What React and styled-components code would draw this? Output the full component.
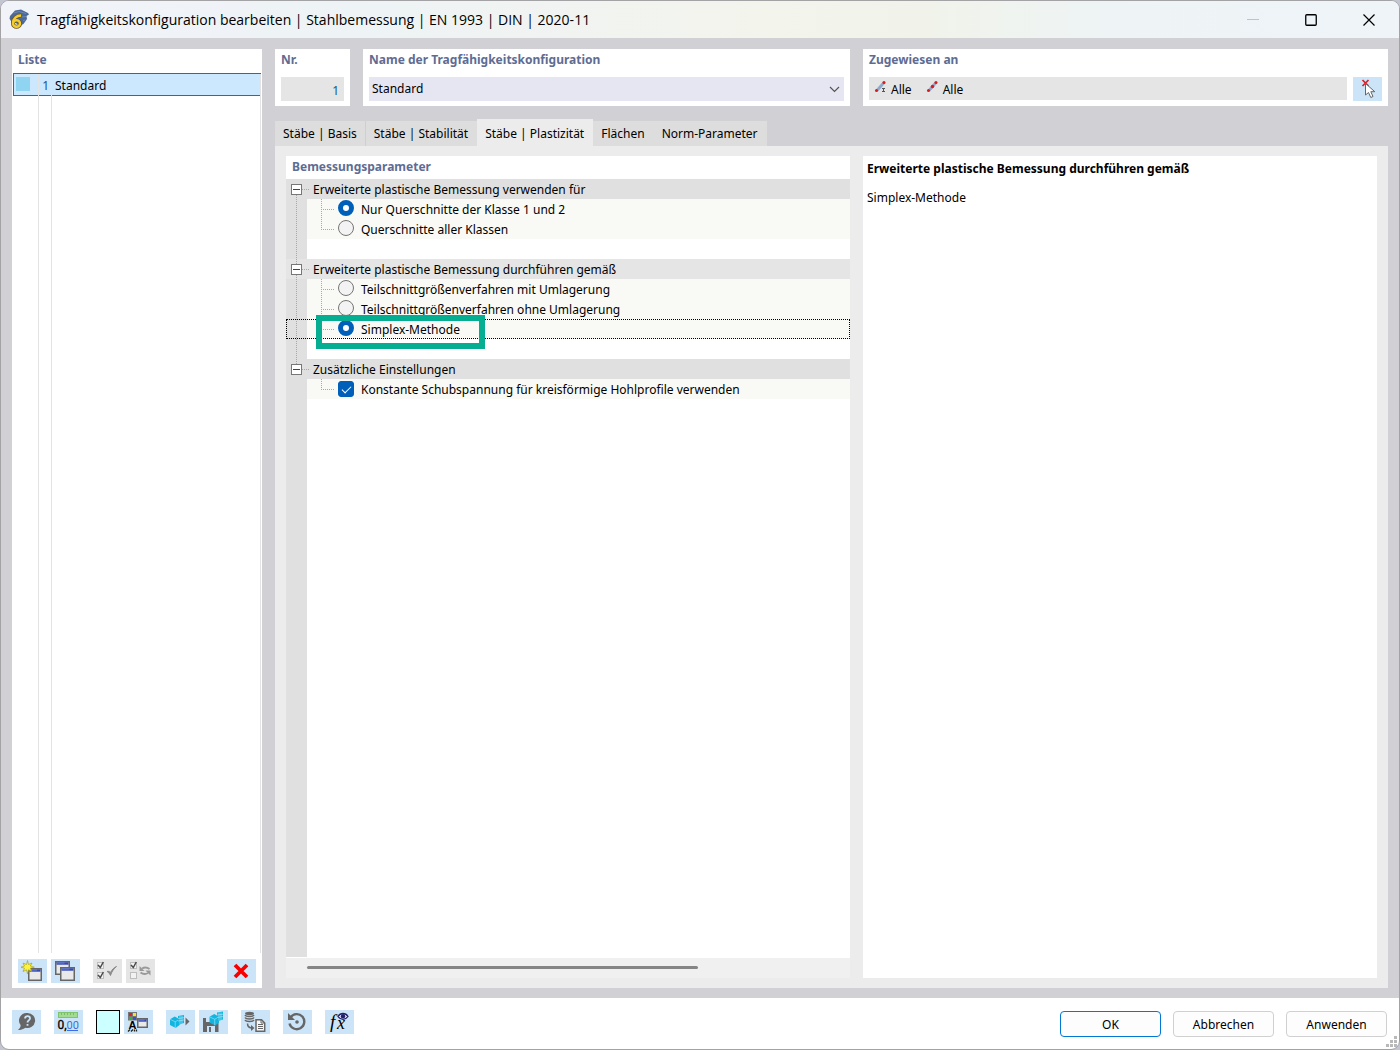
import React, { useState } from "react";
import styled, { createGlobalStyle, css } from "styled-components";

const BLUE = "#cce4f7";
const dotsDown = "repeating-linear-gradient(to bottom, #a8a8a8 0 1px, transparent 1px 2px)";
const dotsAcross = "repeating-linear-gradient(to right, #a8a8a8 0 1px, transparent 1px 2px)";

const GlobalStyle = createGlobalStyle`
  * { box-sizing: border-box; }
  body {
    margin: 0;
    background: #c3c5d0;
    color: #000;
    font-family: "Noto Sans", "Open Sans", sans-serif;
    font-size: 12px;
    line-height: 20px;
  }
  button, input, select { font: inherit; color: inherit; margin: 0; }
`;

const Window = styled.div`
  display: flex;
  flex-direction: column;
  min-height: 100vh;
  border: 1px solid #a3a3a6;
  border-radius: 9px;
  background: #fff;
  overflow: hidden;
  position: relative;
`;

const TitleBar = styled.header`
  display: flex;
  align-items: center;
  height: 37px;
  padding: 0 1px 0 8px;
  background: linear-gradient(to right, #f1f3f9 0%, #eef3f6 25%, #f3f4ec 55%, #f1f3ea 66%, #eef3f6 80%, #eff4f8 100%);
`;

const Title = styled.h1`
  flex: 1;
  margin: 0 0 0 7px;
  font-family: "Open Sans", "Noto Sans", sans-serif;
  font-size: 14px;
  font-weight: 400;
`;

const CaptionButton = styled.button`
  display: flex;
  align-items: center;
  justify-content: center;
  width: 58px;
  height: 36px;
  padding: 0;
  border: 0;
  background: none;
`;

const Body = styled.main`
  flex: 1;
  display: grid;
  grid-template-columns: 250px minmax(0, 1fr);
  gap: 13px;
  padding: 11px 11px 10px;
  background: #d1d0d5;
`;

const Panel = styled.section`
  display: flex;
  flex-direction: column;
  min-width: 0;
  background: #fff;
`;

const Heading = styled.h2`
  margin: 0;
  padding: 1px 6px 2px;
  font-size: 12px;
  font-weight: 700;
  line-height: 20px;
  color: #5e6c93;
`;

const ListHeading = styled(Heading)`
  padding-bottom: 3px;
`;

const listColumns = css`
  display: grid;
  grid-template-columns: 25px 13px minmax(0, 1fr);
  margin-right: 1px;
  & > span { border-right: 1px solid #e3e3e3; }
`;

const ListItem = styled.button`
  ${listColumns}
  height: 23px;
  margin-left: 1px;
  padding: 0;
  border: solid #0078d7;
  border-width: 1px 0 1px 1px;
  background: #cce8ff;
  text-align: left;
  line-height: 23px;
`;

const ItemSwatch = styled.span`
  padding: 3px 0 0 2px;
  &::before {
    content: "";
    display: block;
    width: 14px;
    height: 14px;
    background: #8fd5f2;
  }
`;

const ItemNumber = styled.span`
  padding-right: 2px;
  text-align: right;
  color: #20558c;
`;

const ItemName = styled.span`
  padding-left: 3px;
`;

const ListSpace = styled.div`
  ${listColumns}
  flex: 1;
  margin-left: 2px;
`;

const ListTools = styled.div`
  display: flex;
  gap: 4px;
  padding: 6px 6px 5px;
`;

const IconButton = styled.button`
  display: block;
  flex: none;
  width: 29px;
  height: 24px;
  padding: 0;
  border: 0;
  background: ${(p) => (p.disabled ? "#e5e5e5" : BLUE)};
  margin-left: ${(p) => (p.$start ? "9px" : p.$end ? "auto" : "0")};
  svg { display: block; }
`;

const Details = styled.div`
  display: flex;
  flex-direction: column;
  min-width: 0;
`;

const Fields = styled.div`
  display: grid;
  grid-template-columns: 75px minmax(0, 487fr) minmax(0, 525fr);
  gap: 13px;
`;

const FieldPanel = styled(Panel)`
  height: 57px;
`;

const FieldBody = styled.div`
  display: flex;
  gap: 6px;
  padding: 5px 6px;
`;

const NumberInput = styled.input`
  width: 100%;
  height: 24px;
  padding: 2px 5px 0;
  border: 0;
  background: #e5e5e5;
  color: #20558c;
  text-align: right;
`;

const SelectBox = styled.div`
  flex: 1;
  display: grid;
  align-items: center;
  background: #e6e6f2;
  & > * { grid-area: 1 / 1; }
  svg { justify-self: end; margin-right: 4px; pointer-events: none; }
`;

const Select = styled.select`
  width: 100%;
  height: 24px;
  padding: 0 24px 0 3px;
  border: 0;
  background: none;
  appearance: none;
`;

const Assigned = styled.div`
  flex: 1;
  display: flex;
  gap: 14px;
  height: 23px;
  padding: 0 5px;
  background: #e5e5e5;
`;

const AssignedItem = styled.span`
  display: flex;
  gap: 2px;
  line-height: 26px;
`;

const Tabs = styled.div`
  display: flex;
  align-items: flex-end;
  margin-top: 13px;
`;

const Tab = styled.button`
  padding: ${(p) => (p["aria-selected"] ? 5 : 3)}px 8px 2px;
  border: 0;
  border-right: 1px solid ${(p) => (p["aria-selected"] ? "#ececec" : p.$divided ? "#cfcfd2" : "#dddddd")};
  background: ${(p) => (p["aria-selected"] ? "#ececec" : "#dddddd")};
  white-space: nowrap;
`;

const TabPage = styled.div`
  flex: 1;
  display: grid;
  grid-template-columns: minmax(0, 564fr) minmax(0, 514fr);
  gap: 13px;
  padding: 10px 11px;
  background: #ececec;
`;

const Tree = styled.div`
  flex: 1;
  display: flex;
  flex-direction: column;
`;

const Gutter = styled.span`
  flex: none;
  width: 21px;
  align-self: stretch;
  background: ${(p) => (p.$line ? `${dotsDown} 10px 0 / 1px 100% no-repeat, ` : "")}#e0e0e0;
`;

const GroupRow = styled.div`
  display: flex;
  height: 20px;
  background: ${(p) => p.$tint};
`;

const GroupToggle = styled.button`
  flex: none;
  display: flex;
  align-items: center;
  width: 25px;
  height: 20px;
  padding: 0 0 0 5px;
  border: 0;
  background:
    ${(p) => (p.$lineAbove ? `${dotsDown} 10px 0 / 1px 5px no-repeat,` : "")}
    ${(p) => (p.$lineBelow ? `${dotsDown} 10px 16px / 1px 4px no-repeat,` : "")}
    ${dotsAcross} 16px 10px / 8px 1px no-repeat;
`;

const GroupName = styled.span`
  padding-left: 2px;
  line-height: 22px;
`;

const OptionRow = styled.div`
  display: flex;
  height: 20px;
  background: #f9faf5;
  ${(p) => p.$focused && css`outline: 1px dotted #000; outline-offset: -1px;`}
`;

const SpacerRow = styled.div`
  display: flex;
  height: 20px;
`;

const Branch = styled.span`
  flex: none;
  width: 31px;
  padding-left: 14px;
  &::before {
    content: "";
    display: block;
    width: 13px;
    height: ${(p) => (p.$last ? 11 : 20)}px;
    background: ${dotsDown} 0 0 / 1px 100% no-repeat, ${dotsAcross} 0 10px / 13px 1px no-repeat;
  }
`;

const Option = styled.label`
  display: flex;
  gap: 7px;
  line-height: 22px;
  white-space: nowrap;
  position: relative;
`;

const Radio = styled.input`
  appearance: none;
  width: 16px;
  height: 16px;
  margin-top: 1px;
  border: 1px solid #757575;
  border-radius: 50%;
  background: #f3f3f3;
  &:checked { border: 5px solid #005fb8; background: #fff; }
`;

const Checkbox = styled.input`
  appearance: none;
  width: 16px;
  height: 16px;
  margin-top: 2px;
  border: 1px solid #757575;
  border-radius: 3px;
  background: #f3f3f3;
  &:checked {
    border-color: #005fb8;
    background: #005fb8;
    display: grid;
    place-items: center;
  }
  &:checked::before {
    content: "";
    width: 8px;
    height: 4px;
    border: solid #fff;
    border-width: 0 0 1px 1px;
    transform: rotate(-45deg);
    margin-bottom: 2px;
  }
`;

const Marker = styled.span`
  position: absolute;
  top: -4px;
  left: -22px;
  width: 169px;
  height: 34px;
  border: 6px solid #05ae90;
  pointer-events: none;
  z-index: 1;
`;

const TreeSpace = styled.div`
  flex: 1;
  display: flex;
`;

const ScrollBar = styled.div`
  height: 21px;
  padding: 8px 0 0 21px;
  border-top: 1px solid #fff;
  background: #f0f0f0;
  &::before {
    content: "";
    display: block;
    width: 72%;
    height: 3px;
    border-radius: 2px;
    background: #858585;
  }
`;

const InfoPanel = styled(Panel)`
  padding: 3px 4px;
`;

const InfoTitle = styled.h3`
  margin: 0 0 9px;
  font-size: 12px;
  font-weight: 700;
`;

const InfoText = styled.p`
  margin: 0;
`;

const Footer = styled.footer`
  display: flex;
  justify-content: space-between;
  height: 51px;
  padding: 12px 12px 0 11px;
`;

const FooterTools = styled.div`
  display: flex;
  gap: 4px;
`;

const ColorButton = styled(IconButton)`
  width: 24px;
  border: 1px solid #000;
  background: #ccffff;
`;

const DialogButtons = styled.div`
  display: flex;
  gap: 12px;
  padding-top: 1px;
`;

const DialogButton = styled.button`
  width: 101px;
  height: 26px;
  padding: 2px 0 0;
  border: 1px solid ${(p) => (p.$primary ? "#0078d4" : "#d0d0d0")};
  border-radius: 4px;
  background: #fdfdfd;
`;

const Grip = styled.svg`
  position: absolute;
  right: 2px;
  bottom: 2px;
`;

const Icon = ({ children }) => (
  <svg width="29" height="24" viewBox="0 0 29 24" fill="none" aria-hidden="true">{children}</svg>
);

const MiniWindow = ({ x, y, w = 14, h = 13 }) => (
  <g transform={`translate(${x} ${y})`}>
    <rect x=".75" y=".75" width={w - 1.5} height={h - 1.5} fill="#e9e9e9" stroke="#666" strokeWidth="1.5" />
    <path d={`M1.500 2.500h${w - 3}`} stroke="#3448b0" strokeWidth="2.400" />
    <path d={`M2 2h${w / 2}`} stroke="#6f83d8" strokeWidth="1" />
  </g>
);

const Cube = ({ x, y, s = 1 }) => (
  <g transform={`translate(${x} ${y}) scale(${s})`}>
    <path d="M0 3l5-3 5 3v6l-4 3-6-3z" fill="#12b5df" />
    <path d="M0 3l5.500 2.500L10 3M5.500 5.500V12" stroke="#d5f3fc" strokeWidth=".5" />
  </g>
);

const Building = ({ x, y }) => (
  <g transform={`translate(${x} ${y})`}>
    <path d="M0 1l6-1v8l-6 2z" fill="#12b5df" />
    <path d="M0 3.500l6-.8M0 6l6-1M2 1v8M4 1v8" stroke="#d5f3fc" strokeWidth=".5" />
  </g>
);

const TickBox = ({ y, checked }) => (
  <g>
    <rect x="4.500" y={y} width="6" height="6" fill="#f2f2f2" stroke="#bdbdbd" />
    {checked && <path d={`M5 ${y + 2.5}l2.300 2.500 3-5.500`} stroke="#4b4b4b" strokeWidth="1.500" />}
  </g>
);

const SIX = "M12 6.500C7.500 6.500 4 9.500 4 14.200";

const AppIcon = () => (
  <svg width="21" height="21" viewBox="0 0 21 21" fill="none" aria-hidden="true">
    <path d="M1 7L6 1.500l6-1 7 3.500 1 1.500-2.500 1.500.5 3-3.500 5-3 1.500-10-5-1-2z" fill="#4c6998" />
    <path d="M5 4l5-1.500 7 2M13 8l4-.5M14 11.500l2-.5" stroke="#6f88b2" />
    <g stroke="#6b5a24" strokeWidth="4"><path d={SIX} /><ellipse cx="7.500" cy="14.500" rx="3.500" ry="3.300" /></g>
    <g stroke="#f5cd2e" strokeWidth="2.400"><path d={SIX} /><ellipse cx="7.500" cy="14.500" rx="3.500" ry="3.300" /></g>
  </svg>
);

const MemberIcon = ({ set }) => (
  <svg width="15" height="18" viewBox="0 0 15 18" fill="none" aria-hidden="true">
    <path d="M3 13.500L10 5.500" stroke="#8fa9cc" strokeWidth="2.800" />
    <circle cx="2.500" cy="13.500" r="1.500" fill="#e01818" />
    <circle cx="10" cy="5.500" r="1.500" fill="#e01818" />
    {set ? (
      <circle cx="6.500" cy="9.500" r="1.700" fill="#e01818" />
    ) : (
      <path d="M8 11.500h3M8 14.500h3M9.500 11.500v3" stroke="#555" />
    )}
  </svg>
);

const groups = [
  {
    name: "Erweiterte plastische Bemessung verwenden für",
    key: "scope",
    tint: "#e0e0e0",
    options: ["Nur Querschnitte der Klasse 1 und 2", "Querschnitte aller Klassen"],
  },
  {
    name: "Erweiterte plastische Bemessung durchführen gemäß",
    key: "method",
    tint: "#e5e5e5",
    options: [
      "Teilschnittgrößenverfahren mit Umlagerung",
      "Teilschnittgrößenverfahren ohne Umlagerung",
      "Simplex-Methode",
    ],
  },
];

const tabs = ["Stäbe | Basis", "Stäbe | Stabilität", "Stäbe | Plastizität", "Flächen", "Norm-Parameter"];

function Group({ name, tint, first, last }) {
  return (
    <GroupRow $tint={tint}>
      <GroupToggle aria-label={name} aria-expanded="true" $lineAbove={!first} $lineBelow={!last}>
        <svg width="11" height="11" viewBox="0 0 11 11" fill="none">
          <rect x=".5" y=".5" width="10" height="10" fill="#fff" stroke="#777" />
          <path d="M2 5.500h7" stroke="#444" />
        </svg>
      </GroupToggle>
      <GroupName>{name}</GroupName>
    </GroupRow>
  );
}

export default function App() {
  const [tab, setTab] = useState(2);
  const [values, setValues] = useState({ scope: 0, method: 2 });
  const [constantShear, setConstantShear] = useState(true);

  return (
    <>
      <GlobalStyle />
      <Window>
        <TitleBar>
          <AppIcon />
          <Title>Tragfähigkeitskonfiguration bearbeiten | Stahlbemessung | EN 1993 | DIN | 2020-11</Title>
          <CaptionButton aria-label="Minimieren" disabled>
            <svg width="12" height="12"><path d="M0 5.500h12" stroke="#c0c3c6" /></svg>
          </CaptionButton>
          <CaptionButton aria-label="Maximieren">
            <svg width="12" height="12"><rect x=".75" y=".75" width="10.500" height="10.500" rx="1" fill="none" stroke="#000" strokeWidth="1.300" /></svg>
          </CaptionButton>
          <CaptionButton aria-label="Schließen">
            <svg width="12" height="12"><path d="M.5.5l11 11M11.500.5l-11 11" stroke="#000" strokeWidth="1.200" /></svg>
          </CaptionButton>
        </TitleBar>

        <Body>
          <Panel>
            <ListHeading>Liste</ListHeading>
            <ListItem>
              <ItemSwatch />
              <ItemNumber>1</ItemNumber>
              <ItemName>Standard</ItemName>
            </ListItem>
            <ListSpace><span /><span /><span /></ListSpace>
            <ListTools>
              <IconButton aria-label="Neu">
                <Icon>
                  <MiniWindow x={10} y={9} />
                  <path d="M9.500 1.500l1 4 3.500-1.500-1.700 3 4 1.200-4 1 1.700 3.300-3.500-1.700-1 4-1-4L5 12.500l1.500-3.300-3.500-1 3.500-1.200L5 4l3.500 1.500z" fill="#fff23a" stroke="#a8a01e" strokeWidth=".7" />
                </Icon>
              </IconButton>
              <IconButton aria-label="Kopieren">
                <Icon><MiniWindow x={4} y={2} w={15} h={14} /><MiniWindow x={9} y={8} w={15} h={14} /></Icon>
              </IconButton>
              <IconButton aria-label="Alle auswählen" disabled $start>
                <Icon>
                  <TickBox y={3.5} checked /><TickBox y={13.5} checked />
                  <path d="M14 12.500c1.500.5 2.500 2 3.500 4 1-3.500 3-6.500 6-9-2.500 1-4.500 3-6 6-1-1-2-1.500-3.500-1z" fill="#8a8a8a" stroke="#8a8a8a" strokeWidth="1" />
                </Icon>
              </IconButton>
              <IconButton aria-label="Auswahl umkehren" disabled>
                <Icon>
                  <TickBox y={3.5} checked /><TickBox y={13.5} />
                  <path d="M16 9.500c2.500-1.500 5-1.300 7.500.5M22 14c-2.500 1.500-5 1.300-7.500-.5" stroke="#999" strokeWidth="2" />
                  <path d="M13.500 7v5h5zM24.500 16.500v-5h-5z" fill="#999" />
                </Icon>
              </IconButton>
              <IconButton aria-label="Löschen" $end>
                <Icon><path d="M8 6l12 12M20 6l-12 12" stroke="#f80000" strokeWidth="3.800" /></Icon>
              </IconButton>
            </ListTools>
          </Panel>

          <Details>
            <Fields>
              <FieldPanel>
                <Heading as="label" htmlFor="number">Nr.</Heading>
                <FieldBody><NumberInput id="number" value="1" readOnly /></FieldBody>
              </FieldPanel>
              <FieldPanel>
                <Heading as="label" htmlFor="name">Name der Tragfähigkeitskonfiguration</Heading>
                <FieldBody>
                  <SelectBox>
                    <Select id="name"><option>Standard</option></Select>
                    <svg width="11" height="7" fill="none"><path d="M1 1l4.500 4.500L10 1" stroke="#555" strokeWidth="1.200" /></svg>
                  </SelectBox>
                </FieldBody>
              </FieldPanel>
              <FieldPanel>
                <Heading>Zugewiesen an</Heading>
                <FieldBody>
                  <Assigned>
                    <AssignedItem><MemberIcon />Alle</AssignedItem>
                    <AssignedItem><MemberIcon set />Alle</AssignedItem>
                  </Assigned>
                  <IconButton aria-label="Auswählen">
                    <Icon>
                      <path d="M9.500 3l6 6M15.500 3l-6 6" stroke="#e01c24" strokeWidth="1.700" />
                      <path d="M12.500 6.500v11.500l3-2.500 2.300 5 2.200-1-2.200-4.800h4z" fill="#fff" stroke="#666" />
                    </Icon>
                  </IconButton>
                </FieldBody>
              </FieldPanel>
            </Fields>

            <Tabs role="tablist">
              {tabs.map((label, i) => (
                <Tab key={label} role="tab" aria-selected={tab === i} $divided={i === 0} onClick={() => setTab(i)}>{label}</Tab>
              ))}
            </Tabs>

            <TabPage>
              <Panel>
                <Heading>Bemessungsparameter</Heading>
                <Tree>
                  {groups.map((group, g) => (
                    <React.Fragment key={group.key}>
                      <Group name={group.name} tint={group.tint} first={g === 0} />
                      {group.options.map((text, i) => {
                        const marked = group.key === "method" && i === 2;
                        return (
                          <OptionRow key={text} $focused={marked}>
                            <Gutter $line />
                            <Branch $last={i === group.options.length - 1} />
                            <Option>
                              <Radio
                                type="radio"
                                name={group.key}
                                checked={values[group.key] === i}
                                onChange={() => setValues({ ...values, [group.key]: i })}
                              />
                              {text}
                              {marked && <Marker />}
                            </Option>
                          </OptionRow>
                        );
                      })}
                      <SpacerRow><Gutter $line /></SpacerRow>
                    </React.Fragment>
                  ))}
                  <Group name="Zusätzliche Einstellungen" tint="#e0e0e0" last />
                  <OptionRow>
                    <Gutter />
                    <Branch $last />
                    <Option>
                      <Checkbox type="checkbox" checked={constantShear} onChange={(e) => setConstantShear(e.target.checked)} />
                      Konstante Schubspannung für kreisförmige Hohlprofile verwenden
                    </Option>
                  </OptionRow>
                  <TreeSpace><Gutter /></TreeSpace>
                </Tree>
                <ScrollBar />
              </Panel>
              <InfoPanel>
                <InfoTitle>Erweiterte plastische Bemessung durchführen gemäß</InfoTitle>
                <InfoText>Simplex-Methode</InfoText>
              </InfoPanel>
            </TabPage>
          </Details>
        </Body>

        <Footer>
          <FooterTools>
            <IconButton aria-label="Hilfe">
              <Icon>
                <path d="M15.500 3a7.500 7.500 0 1 1-2 14.700C11 19.500 8.500 20 6 20c2-1.500 2.700-3 2.600-5A7.500 7.500 0 0 1 15.500 3z" fill="#666" />
                <path d="M13 8.500c.2-3.300 5.300-3 5 0-.2 2-2.500 1.800-2.500 4M15.500 14v1.800" stroke={BLUE} strokeWidth="1.800" />
              </Icon>
            </IconButton>
            <IconButton aria-label="Einheiten und Dezimalstellen" $start>
              <Icon>
                <rect x="4.500" y="2.500" width="19" height="5" fill="#a3dc91" stroke="#7fc36d" />
                <path d="M7.500 3v2M10.500 3v2M13.500 3v2M16.500 3v2M19.500 3v2" stroke="#7fb871" />
                <text x="3.500" y="18.500" fontFamily="Roboto, sans-serif" fontSize="12" fill="#000" stroke="#000" strokeWidth=".3">0,</text>
                <text x="12.500" y="18.500" fontFamily="Roboto, sans-serif" fontSize="11" fill="#3b6fe0">00</text>
                <path d="M13 20.500h11" stroke="#3b6fe0" />
              </Icon>
            </IconButton>
            <ColorButton aria-label="Farbe" $start />
            <IconButton aria-label="Darstellung">
              <Icon>
                <rect x="4" y="2" width="9" height="8.500" fill="#777" />
                <path d="M5 3h3v3H5z" fill="#e42020" /><path d="M9 3h3v3H9z" fill="#f5e52a" />
                <path d="M5 7h3v3H5z" fill="#26b83a" /><path d="M9 7h3v3H9z" fill="#3450e0" />
                <text x="4.500" y="18.500" fontFamily="Liberation Sans, sans-serif" fontSize="11" fontWeight="700" fill="#000">A</text>
                <path d="M4 21.500l2-2M7 21.500l2-2M10.500 21.500v-2M12.500 21.500v-2" stroke="#222" strokeWidth="1.300" />
                <MiniWindow x={13} y={8} w={11} h={10} />
              </Icon>
            </IconButton>
            <IconButton aria-label="Importieren" $start>
              <Icon><Cube x={4} y={6.5} s={0.95} /><Building x={12} y={5} /><path d="M19.500 7.500v8l4-4z" fill="#666" /></Icon>
            </IconButton>
            <IconButton aria-label="Speichern">
              <Icon>
                <path d="M4 8h12l3.500 3v11H4z" fill="#666" />
                <path d="M7 8h5v4H7zM8 16h8v6H8z" fill={BLUE} /><path d="M10 17h2v5h-2z" fill="#666" />
                <Cube x={10.5} y={4} s={0.95} /><Building x={18} y={1.5} />
              </Icon>
            </IconButton>
            <IconButton aria-label="Daten" $start>
              <Icon>
                <ellipse cx="8.500" cy="3.500" rx="4.500" ry="1.700" fill="#666" />
                <path d="M4 5c1 2 8 2 9 0M4 7.500c1 2 8 2 9 0M4 10c1 2 8 2 9 0" stroke="#666" strokeWidth="1.500" />
                <path d="M6.500 13.500c0 3 1.500 4.500 5 4.500" stroke="#666" strokeWidth="1.500" /><path d="M10 15l3.500 3-3.500 3z" fill="#666" />
                <path d="M15 9.800h5.500l3.200 3.200v8.200H15z" fill="#f7f7f7" stroke="#666" strokeWidth="1.500" />
                <path d="M17 14.500h5M17 16.500h5M17 18.500h5M20 10v3h3" stroke="#666" />
              </Icon>
            </IconButton>
            <IconButton aria-label="Zurücksetzen" $start>
              <Icon>
                <path d="M7.500 7.500a7.500 7.500 0 1 1-1 6" stroke="#666" strokeWidth="2.400" />
                <path d="M5 3v7h7z" fill="#666" /><circle cx="14" cy="12" r="1.800" fill="#666" />
              </Icon>
            </IconButton>
            <IconButton aria-label="Formel" $start>
              <Icon>
                <text x="5" y="18" fontFamily="Liberation Serif, serif" fontStyle="italic" fontSize="19" fill="#000">f</text>
                <text x="12" y="19" fontFamily="Liberation Serif, serif" fontStyle="italic" fontSize="18" fill="#000">x</text>
                <path d="M13 6.500c2.500-4 7.500-4 10 0-2.500 3.700-7.500 3.700-10 0z" fill="#e9edfb" stroke="#22206b" strokeWidth="1.300" />
                <circle cx="18" cy="6.300" r="2.200" fill="#22206b" />
              </Icon>
            </IconButton>
          </FooterTools>
          <DialogButtons>
            <DialogButton $primary>OK</DialogButton>
            <DialogButton>Abbrechen</DialogButton>
            <DialogButton>Anwenden</DialogButton>
          </DialogButtons>
        </Footer>
        <Grip width="11" height="11" viewBox="0 0 11 11" aria-hidden="true">
          <path d="M8 0h3v3H8zM4 4h3v3H4zM8 4h3v3H8zM0 8h3v3H0zM4 8h3v3H4zM8 8h3v3H8z" fill="#b9b9b9" />
        </Grip>
      </Window>
    </>
  );
}
